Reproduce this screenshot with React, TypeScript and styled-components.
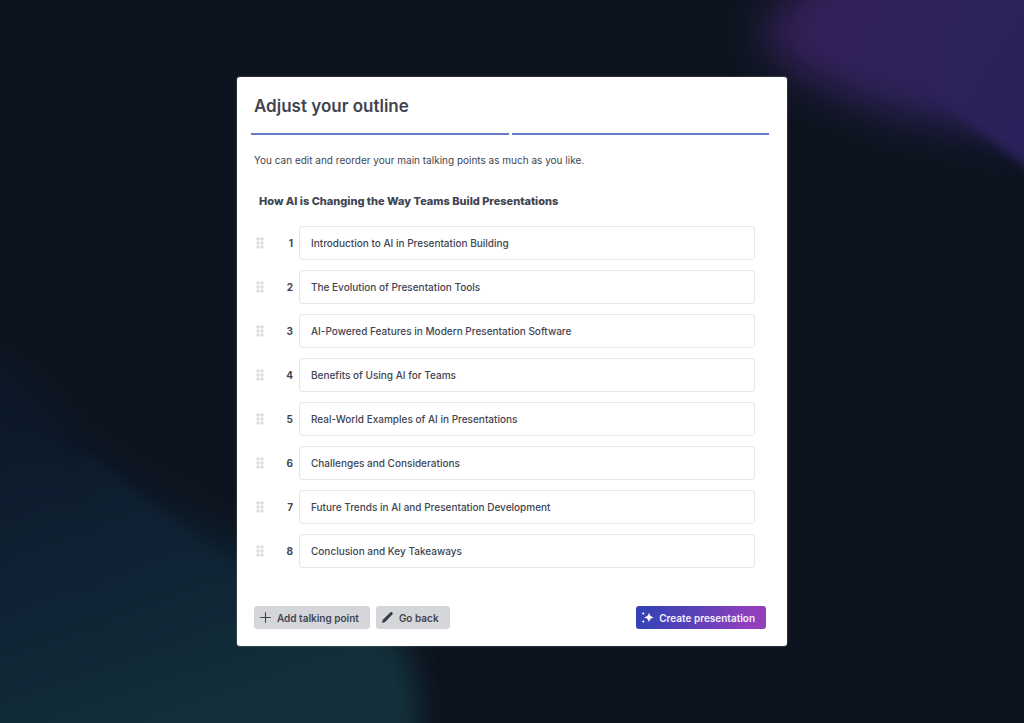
import React, { useState } from "react";
import styled, { createGlobalStyle, css } from "styled-components";

const GlobalStyle = createGlobalStyle`
  *, *::before, *::after { box-sizing: border-box; }
  body {
    margin: 0;
    background: #0d141f;
    color: #414552;
    font-family: Inter, "Liberation Sans", sans-serif;
    font-size: 10px;
    line-height: 16px;
  }
  button, input { font: inherit; color: inherit; }
`;

const Page = styled.main`
  position: relative;
  min-height: 100vh;
  display: flex;
  align-items: center;
  justify-content: center;
  padding: 24px;
  overflow: hidden;
`;

const Backdrop = styled.svg`
  position: absolute;
  inset: 0;
  width: 100%;
  height: 100%;
`;

const Card = styled.section`
  position: relative;
  width: 100%;
  max-width: 550px;
  padding: 17px 18px 17px 14px;
  border-radius: 3px;
  background: #fff;
  box-shadow: 0 0 2px rgba(255, 255, 255, 0.4);
`;

const Title = styled.h1`
  margin: 0 3px;
  font-size: 17px;
  line-height: 24px;
  font-weight: 600;
`;

const Progress = styled.div`
  display: grid;
  grid-template-columns: 1fr 1fr;
  gap: 3px;
  margin-top: 15px;
`;

const Step = styled.span`
  height: 2px;
  background: #6a7acb;
`;

const Hint = styled.p`
  margin: 17px 3px 0;
`;

const Topic = styled.h2`
  margin: 24px 8px 0;
  font-size: 11px;
  line-height: 18px;
  font-weight: 800;
`;

const Points = styled.ol`
  display: flex;
  flex-direction: column;
  gap: 10px;
  margin: 16px 14px 0 3px;
  padding: 0;
  list-style: none;
`;

const Point = styled.li`
  display: grid;
  grid-template-columns: 12px 27px 1fr;
  align-items: center;
`;

const Handle = styled.button`
  display: flex;
  justify-content: center;
  padding: 0;
  border: 0;
  background: none;
  cursor: grab;
`;

const Index = styled.label`
  font-weight: 700;
  text-align: right;
`;

const PointInput = styled.input`
  width: 100%;
  height: 34px;
  min-width: 0;
  padding: 0 11px;
  border: 1px solid #e6e6e9;
  border-radius: 3px;
  background: #fff;
  font-weight: 500;
`;

const PointField = styled.div`
  padding-left: 6px;
`;

const Footer = styled.footer`
  display: flex;
  flex-wrap: wrap;
  gap: 6px;
  margin: 38px 3px 0;
`;

const Button = styled.button<{ $primary?: boolean }>`
  display: inline-flex;
  align-items: center;
  gap: 5px;
  height: 23px;
  padding: 0 11px 0 5px;
  border: 0;
  border-radius: 3px;
  background: #d5d6da;
  font-weight: 600;
  cursor: pointer;
  ${(p) =>
    p.$primary &&
    css`
      margin-left: auto;
      background: linear-gradient(110deg, #2f42b4, #5a41b8 45%, #913fbd 85%);
      color: #f4f0fb;
    `}
`;

const DotsIcon = () => (
  <svg width="8" height="12" viewBox="0 0 8 12" fill="#dcdcdf" aria-hidden="true">
    {[2, 6, 10].map((y) => (
      <React.Fragment key={y}>
        <circle cx="2" cy={y} r="1.7" />
        <circle cx="6" cy={y} r="1.7" />
      </React.Fragment>
    ))}
  </svg>
);

const PlusIcon = () => (
  <svg width="13" height="13" viewBox="0 0 13 13" stroke="#414552" strokeWidth="1.1" aria-hidden="true">
    <path d="M6.5 1.2v10.6M1.2 6.5h10.6" />
  </svg>
);

const PencilIcon = () => (
  <svg width="13" height="13" viewBox="0 0 13 13" fill="#343947" aria-hidden="true">
    <path d="M1 12l.8-3.200L9.300 1.500c.6-.6 1.400-.6 2 0s.6 1.400 0 2L4.100 11z" />
  </svg>
);

const SparkleIcon = () => (
  <svg width="13" height="13" viewBox="0 0 13 13" fill="#fff" aria-hidden="true">
    <path d="M8 1.600c.8 3.200 1.600 4.100 4.900 4.900-3.300.8-4.100 1.700-4.900 4.900-.8-3.200-1.600-4.100-4.900-4.900 3.300-.8 4.100-1.700 4.900-4.900z" />
    <path d="M2.200.8l.5 1.200 1.200.5-1.200.5-.5 1.200-.5-1.200L.5 2.500l1.200-.5zM2.200 8.800l.5 1.200 1.200.5-1.200.5-.5 1.200-.5-1.200-1.200-.5 1.200-.5z" />
  </svg>
);

const initialPoints = [
  "Introduction to AI in Presentation Building",
  "The Evolution of Presentation Tools",
  "AI-Powered Features in Modern Presentation Software",
  "Benefits of Using AI for Teams",
  "Real-World Examples of AI in Presentations",
  "Challenges and Considerations",
  "Future Trends in AI and Presentation Development",
  "Conclusion and Key Takeaways",
];

export default function App() {
  const [points, setPoints] = useState(initialPoints);

  return (
    <>
      <GlobalStyle />
      <Page>
        <Backdrop viewBox="0 0 1024 723" preserveAspectRatio="none" aria-hidden="true">
          <defs>
            <linearGradient id="violet" gradientUnits="userSpaceOnUse" x1="800" y1="20" x2="1010" y2="150">
              <stop offset="0" stopColor="#36205a" />
              <stop offset="0.35" stopColor="#30225a" />
              <stop offset="1" stopColor="#2a225a" />
            </linearGradient>
            <linearGradient id="teal" gradientUnits="userSpaceOnUse" x1="120" y1="380" x2="240" y2="723">
              <stop offset="0" stopColor="#0d192b" />
              <stop offset="0.5" stopColor="#0f2334" />
              <stop offset="0.8" stopColor="#112b38" />
              <stop offset="1" stopColor="#14313b" />
            </linearGradient>
            <filter id="soft" x="-30%" y="-30%" width="160%" height="160%" colorInterpolationFilters="sRGB">
              <feGaussianBlur stdDeviation="20" />
            </filter>
            <filter id="medium" x="-30%" y="-30%" width="160%" height="160%" colorInterpolationFilters="sRGB">
              <feGaussianBlur stdDeviation="14" />
            </filter>
            <filter id="crisp" x="-30%" y="-30%" width="160%" height="160%" colorInterpolationFilters="sRGB">
              <feGaussianBlur stdDeviation="5" />
            </filter>
          </defs>
          <path filter="url(#soft)" fill="url(#violet)" d="M756 34L820-30H1080V160L1000 136 880 112 800 76z" />
          <path filter="url(#medium)" fill="url(#violet)" d="M812 34L870-20H1080V180L965 106 900 76 850 54z" />
          <path filter="url(#crisp)" fill="url(#violet)" d="M930-20H1060V190L955 112 935 92z" />
          <path filter="url(#soft)" fill="url(#teal)" d="M-60 330L20 380 80 450 150 500 260 560 390 640 400 780H-60z" />
          <path filter="url(#medium)" fill="url(#teal)" d="M-20 430L50 460 110 495 240 590 400 640 416 690V760H-40z" />
          <path filter="url(#crisp)" fill="url(#teal)" d="M80 450L130 490 190 535 240 572V660L100 640z" />
        </Backdrop>
        <Card aria-labelledby="outline-title">
          <Title id="outline-title">Adjust your outline</Title>
          <Progress>
            <Step />
            <Step />
          </Progress>
          <Hint>You can edit and reorder your main talking points as much as you like.</Hint>
          <Topic>How AI is Changing the Way Teams Build Presentations</Topic>
          <Points>
            {points.map((text, i) => (
              <Point key={i}>
                <Handle type="button" aria-label={`Reorder point ${i + 1}`}>
                  <DotsIcon />
                </Handle>
                <Index htmlFor={`point-${i}`}>{i + 1}</Index>
                <PointField>
                  <PointInput
                    id={`point-${i}`}
                    value={text}
                    onChange={(e) => setPoints(points.map((p, j) => (j === i ? e.target.value : p)))}
                  />
                </PointField>
              </Point>
            ))}
          </Points>
          <Footer>
            <Button type="button" onClick={() => setPoints([...points, ""])}>
              <PlusIcon />
              Add talking point
            </Button>
            <Button type="button">
              <PencilIcon />
              Go back
            </Button>
            <Button type="button" $primary>
              <SparkleIcon />
              Create presentation
            </Button>
          </Footer>
        </Card>
      </Page>
    </>
  );
}
